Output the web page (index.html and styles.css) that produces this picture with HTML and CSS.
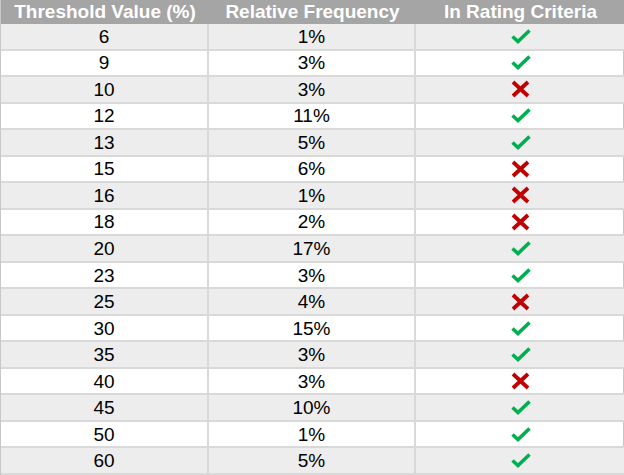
FILE: index.html
```html
<!DOCTYPE html>
<html>
<head>
<meta charset="utf-8">
<link rel="stylesheet" href="styles.css">
</head>
<body>
<svg width="0" height="0" class="defs">
  <defs>
    <symbol id="ok" viewBox="0 0 20 15">
      <path d="M1.5 7.5 L7 12.5 L18.5 1.5" fill="none" stroke="#00b050" stroke-width="3.6" stroke-linejoin="miter" stroke-linecap="butt"/>
    </symbol>
    <symbol id="no" viewBox="0 0 19 18">
      <path d="M2 2 L17 16 M17 2 L2 16" fill="none" stroke="#c00000" stroke-width="3.8"/>
    </symbol>
  </defs>
</svg>
<div class="table">
  <div class="hd">Threshold Value (%)</div><div class="hd">Relative Frequency</div><div class="hd">In Rating Criteria</div>
  <div class="c alt">6</div><div class="c alt">1%</div><div class="c alt"><svg class="ico ok"><use href="#ok"/></svg></div>
  <div class="c">9</div><div class="c">3%</div><div class="c"><svg class="ico ok"><use href="#ok"/></svg></div>
  <div class="c alt">10</div><div class="c alt">3%</div><div class="c alt"><svg class="ico no"><use href="#no"/></svg></div>
  <div class="c">12</div><div class="c">11%</div><div class="c"><svg class="ico ok"><use href="#ok"/></svg></div>
  <div class="c alt">13</div><div class="c alt">5%</div><div class="c alt"><svg class="ico ok"><use href="#ok"/></svg></div>
  <div class="c">15</div><div class="c">6%</div><div class="c"><svg class="ico no"><use href="#no"/></svg></div>
  <div class="c alt">16</div><div class="c alt">1%</div><div class="c alt"><svg class="ico no"><use href="#no"/></svg></div>
  <div class="c">18</div><div class="c">2%</div><div class="c"><svg class="ico no"><use href="#no"/></svg></div>
  <div class="c alt">20</div><div class="c alt">17%</div><div class="c alt"><svg class="ico ok"><use href="#ok"/></svg></div>
  <div class="c">23</div><div class="c">3%</div><div class="c"><svg class="ico ok"><use href="#ok"/></svg></div>
  <div class="c alt">25</div><div class="c alt">4%</div><div class="c alt"><svg class="ico no"><use href="#no"/></svg></div>
  <div class="c">30</div><div class="c">15%</div><div class="c"><svg class="ico ok"><use href="#ok"/></svg></div>
  <div class="c alt">35</div><div class="c alt">3%</div><div class="c alt"><svg class="ico ok"><use href="#ok"/></svg></div>
  <div class="c">40</div><div class="c">3%</div><div class="c"><svg class="ico no"><use href="#no"/></svg></div>
  <div class="c alt">45</div><div class="c alt">10%</div><div class="c alt"><svg class="ico ok"><use href="#ok"/></svg></div>
  <div class="c">50</div><div class="c">1%</div><div class="c"><svg class="ico ok"><use href="#ok"/></svg></div>
  <div class="c alt">60</div><div class="c alt">5%</div><div class="c alt"><svg class="ico ok"><use href="#ok"/></svg></div>
</div>
</body>
</html>
```

FILE: styles.css
```css
html, body {
  margin: 0;
  padding: 0;
  background: #ffffff;
}
.defs {
  position: absolute;
  width: 0;
  height: 0;
}
.table {
  width: 624px;
  height: 475px;
  display: grid;
  grid-template-columns: 208px 207px 209px;
  grid-template-rows: 24px repeat(17, 1fr);
  font-family: "Liberation Sans", Arial, sans-serif;
  box-sizing: border-box;
  border-left: 1px solid #c8c8c8;
  border-right: 1px solid #c8c8c8;
}
.hd {
  background: #a5a5a5;
  color: #ffffff;
  font-weight: bold;
  font-size: 19px;
  display: flex;
  align-items: center;
  justify-content: center;
  line-height: 1;
  padding-bottom: 1px;
}
.c {
  font-size: 19px;
  color: #000000;
  display: flex;
  align-items: center;
  justify-content: center;
  border-bottom: 2px solid #d9d9d9;
  border-right: 2px solid #d9d9d9;
  line-height: 1;
}
.c:nth-child(3n) {
  border-right: none;
}
.alt {
  background: #ededed;
}
.ico.ok {
  width: 20px;
  height: 15px;
}
.ico.no {
  width: 19px;
  height: 18px;
}
```
